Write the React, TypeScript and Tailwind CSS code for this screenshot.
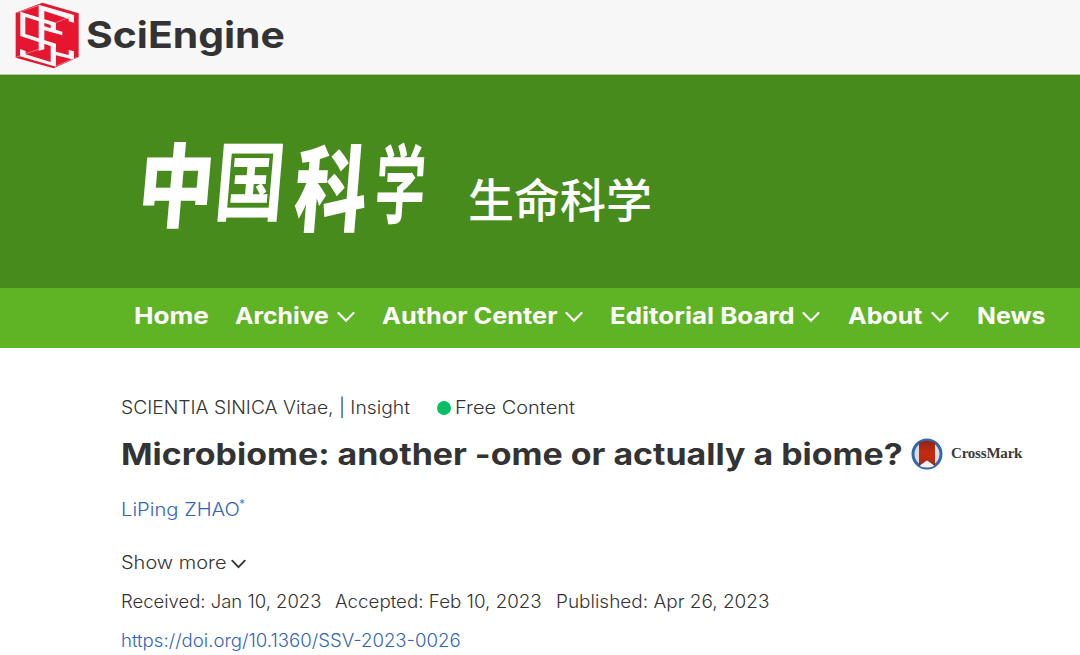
import type { ReactNode } from "react";

function CubeLogo() {
  return (
    <svg className="h-[74px] w-[74px] shrink-0" viewBox="0 0 222 222" fill="none">
      <path d="M97 8 206 40V171L131 205 17 173V38Z" fill="#e6162e" />
      <path d="M86 14 192 45V68L176 64V57L103 33V79L157 95V106L103 91V148L86 153Z" fill="#f7f7f7" />
      <path d="M138 155 176 165V150L192 154V179L138 166Z" fill="#f7f7f7" />
      <path d="M31 35 138 68V97L122 92V75L46 51V102L138 131V200L30 169V147L47 153V163L122 186V138L31 108Z" fill="#f7f7f7" />
      <g stroke="#f4b3bb" strokeWidth="1.8">
        <path d="M22 38 90 15M137 68 180 51M45 162 88 147M137 199 200 172M18 172 31 167" />
      </g>
    </svg>
  );
}

function Chevron({ className }: { className: string }) {
  return (
    <svg className={className} viewBox="0 0 18 12" fill="none" stroke="currentColor" strokeLinecap="round">
      <path d="M1.5 2 9 9.7 16.5 2" />
    </svg>
  );
}

function NavItem({ children, className, label, menu }: { children: ReactNode; className: string; label: string; menu?: boolean }) {
  return (
    <a className={`flex shrink-0 items-center whitespace-nowrap ${className}`}>
      <span className={`shrink-0 origin-left ${label}`}>{children}</span>
      {menu && <Chevron className="mt-px h-3 w-[18px] shrink-0 stroke-[2.2]" />}
    </a>
  );
}

function CrossMark() {
  return (
    <div className="flex items-center">
      <svg className="h-8 w-8" viewBox="0 0 32 32">
        <defs>
          <linearGradient id="ribbon" x1="0" y1="0" x2="0" y2="1">
            <stop offset="0" stopColor="#8f2416" />
            <stop offset="0.45" stopColor="#c42a12" />
            <stop offset="0.8" stopColor="#b92a13" />
            <stop offset="1" stopColor="#8c2515" />
          </linearGradient>
        </defs>
        <circle cx="16" cy="16" r="14" fill="#d9dde3" stroke="#3269a8" strokeWidth="3" />
        <path d="M8 4.5Q16 1 24 4.5V28L16 22.5 8 28Z" fill="url(#ribbon)" />
        <path d="M8.5 28 16 22.8 23.5 28Q16 31 8.5 28Z" fill="#f4f4f4" />
      </svg>
      <span className="-mt-px ml-2 font-['Liberation_Serif',serif] text-[15px] leading-none font-bold tracking-[-0.2px] text-[#3a3a3a]">CrossMark</span>
    </div>
  );
}

export default function App() {
  return (
    <div className="h-[655px] overflow-hidden bg-white font-['Inter',sans-serif] text-[#333]">
      <header className="flex h-[75px] border-b border-[#b5cda2] bg-[#f7f7f7] pl-[10px]">
        <CubeLogo />
        <span className="ml-[2px] origin-left scale-x-[1.12] pt-[13px] text-[36.5px] leading-[45px] font-bold">SciEngine</span>
      </header>

      <div className="flex h-[213px] bg-[#488b1d] text-white">
        <div className="ml-[136px] flex w-[332px] pt-[66px] font-['Noto_Sans_CJK_SC',sans-serif] text-[76px] leading-[90px]">
          <span className="w-[74px] -skew-x-6 scale-y-[1.2] font-black">中</span>
          <span className="w-[81px] -translate-y-1.5 -skew-x-6 scale-x-[0.92] scale-y-[1.14] font-bold">国</span>
          <span className="w-[71px] translate-y-1 -skew-x-6 scale-x-95 scale-y-[1.23] font-black">科</span>
          <span className="w-[70px] -translate-y-[3px] -skew-x-6 scale-x-[0.66] scale-y-[1.14] font-bold">学</span>
        </div>
        <span className="pt-[89px] font-['Noto_Sans_CJK_SC',sans-serif] text-[46px] leading-[66px] font-medium">生命科学</span>
      </div>

      <nav className="flex h-[60px] items-center bg-[#5fb426] pb-[4px] pl-[134px] text-[23px] font-bold text-white">
        <NavItem className="w-[101px]" label="scale-x-[1.135]">Home</NavItem>
        <NavItem className="w-[147px]" label="w-[102px] scale-x-[1.076]" menu>Archive</NavItem>
        <NavItem className="w-[228px]" label="w-[183px] scale-x-[1.1]" menu>Author Center</NavItem>
        <NavItem className="w-[238px]" label="w-[192px] scale-x-[1.126]" menu>Editorial Board</NavItem>
        <NavItem className="w-[129px]" label="w-[83px] scale-x-[1.085]" menu>About</NavItem>
        <NavItem className="" label="scale-x-[1.08]">News</NavItem>
      </nav>

      <main className="pt-[46px] pl-[121px] text-[18px] leading-[28px] font-[350] whitespace-nowrap">
        <div className="flex h-[28px] items-center">
          <span className="w-[316px] shrink-0">
            <span className="inline-block origin-left scale-x-[1.07]">SCIENTIA SINICA Vitae, | Insight</span>
          </span>
          <span className="-mt-px h-[14px] w-[14px] rounded-full bg-[#07c160]" />
          <span className="ml-[4px] origin-left scale-x-[1.11]">Free Content</span>
        </div>
        <div className="mt-3 flex h-[40px] items-center">
          <h1 className="w-[790px] shrink-0 origin-left scale-x-[1.131] text-[30px] leading-[40px] font-bold">Microbiome: another -ome or actually a biome?</h1>
          <CrossMark />
        </div>
        <div className="mt-[22px] flex h-[28px] text-[#3366bb]">
          <a className="w-[118px] origin-left scale-x-[1.12]">LiPing ZHAO</a>
          <span className="-mt-[4px] text-[12px] leading-[24px]">*</span>
        </div>
        <div className="mt-[25px] flex h-[28px] items-center">
          <span className="w-[110px] origin-left scale-x-[1.11]">Show more</span>
          <Chevron className="mt-px h-[10px] w-[15px] stroke-[2.2]" />
        </div>
        <div className="mt-[11px] flex h-[28px]">
          <span className="w-[214px] origin-left scale-x-[1.027]">Received: Jan 10, 2023</span>
          <span className="w-[221px] origin-left scale-x-[1.042]">Accepted: Feb 10, 2023</span>
          <span className="origin-left scale-x-[1.054]">Published: Apr 26, 2023</span>
        </div>
        <a className="mt-[11px] block h-[28px] origin-left scale-x-[1.033] text-[#3366bb]">https://doi.org/10.1360/SSV-2023-0026</a>
      </main>
    </div>
  );
}
